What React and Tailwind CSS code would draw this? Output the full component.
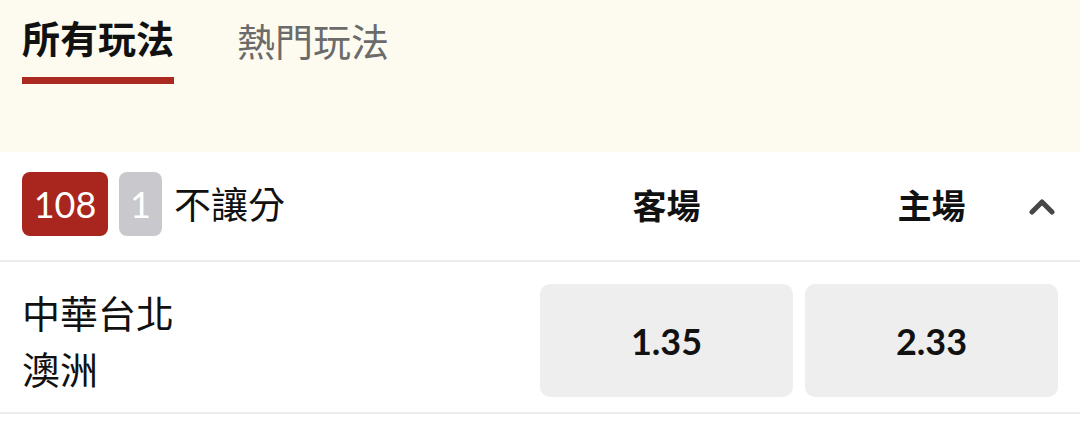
import React from 'react';

const cjk = { fontFamily: '"Noto Sans CJK TC", "Noto Sans", sans-serif' };
const num = { fontFamily: 'Lato, "Noto Sans CJK TC", sans-serif' };

const ChevronUp = () => (
  <svg width="26" height="18" viewBox="0 0 26 18" fill="none">
    <path d="M3 15 L13 5 L23 15" stroke="#474747" strokeWidth="5" strokeLinecap="round" strokeLinejoin="round" />
  </svg>
);

const OddsButton = ({ value }) => (
  <button className="flex-1 h-[113px] rounded-[10px] bg-[#eeeeee] flex items-center justify-center text-[36px] font-bold text-[#111]" style={num}>
    {value}
  </button>
);

export default function App() {
  return (
    <div className="w-[1080px] h-[433px] bg-white overflow-hidden" style={cjk}>
      <div className="h-[152px] bg-[#fdfaef] px-[22px] flex gap-[63px]">
        <div className="flex flex-col pt-[9px]">
          <span className="text-[38px] leading-[56px] font-bold text-[#111]">所有玩法</span>
          <div className="mt-[12px] h-[7px] bg-[#aa2a21]"></div>
        </div>
        <div className="pt-[12px]">
          <span className="text-[38px] leading-[56px] text-[#6b6b6b]">熱門玩法</span>
        </div>
      </div>

      <div className="bg-white">
        <div className="relative h-[110px] border-b-2 border-[#ececec] flex items-center pl-[22px] pr-[22px] pb-[4px]">
          <div className="flex items-center flex-1">
            <span className="w-[86px] h-[64px] rounded-[8px] bg-[#a8261d] text-white text-[36px] flex items-center justify-center" style={num}>108</span>
            <span className="ml-[11px] w-[43px] h-[64px] rounded-[8px] bg-[#c9c9cd] text-white text-[36px] flex items-center justify-center" style={num}>1</span>
            <span className="ml-[12px] text-[37px] text-[#111]">不讓分</span>
          </div>
          <div className="w-[518px] flex gap-[12px]">
            <span className="flex-1 text-center text-[34px] font-bold text-[#111]">客場</span>
            <span className="flex-1 text-center text-[34px] font-bold text-[#111]">主場</span>
          </div>
          <div className="absolute right-[25px] top-[45px]">
            <ChevronUp />
          </div>
        </div>

        <div className="h-[152px] border-b-2 border-[#ececec] flex items-start pl-[22px] pr-[22px] pt-[22px]">
          <div className="flex-1 flex flex-col text-[38px] leading-[56px] text-[#111]">
            <span>中華台北</span>
            <span>澳洲</span>
          </div>
          <div className="w-[518px] flex gap-[12px]">
            <OddsButton value="1.35" />
            <OddsButton value="2.33" />
          </div>
        </div>
      </div>
    </div>
  );
}
